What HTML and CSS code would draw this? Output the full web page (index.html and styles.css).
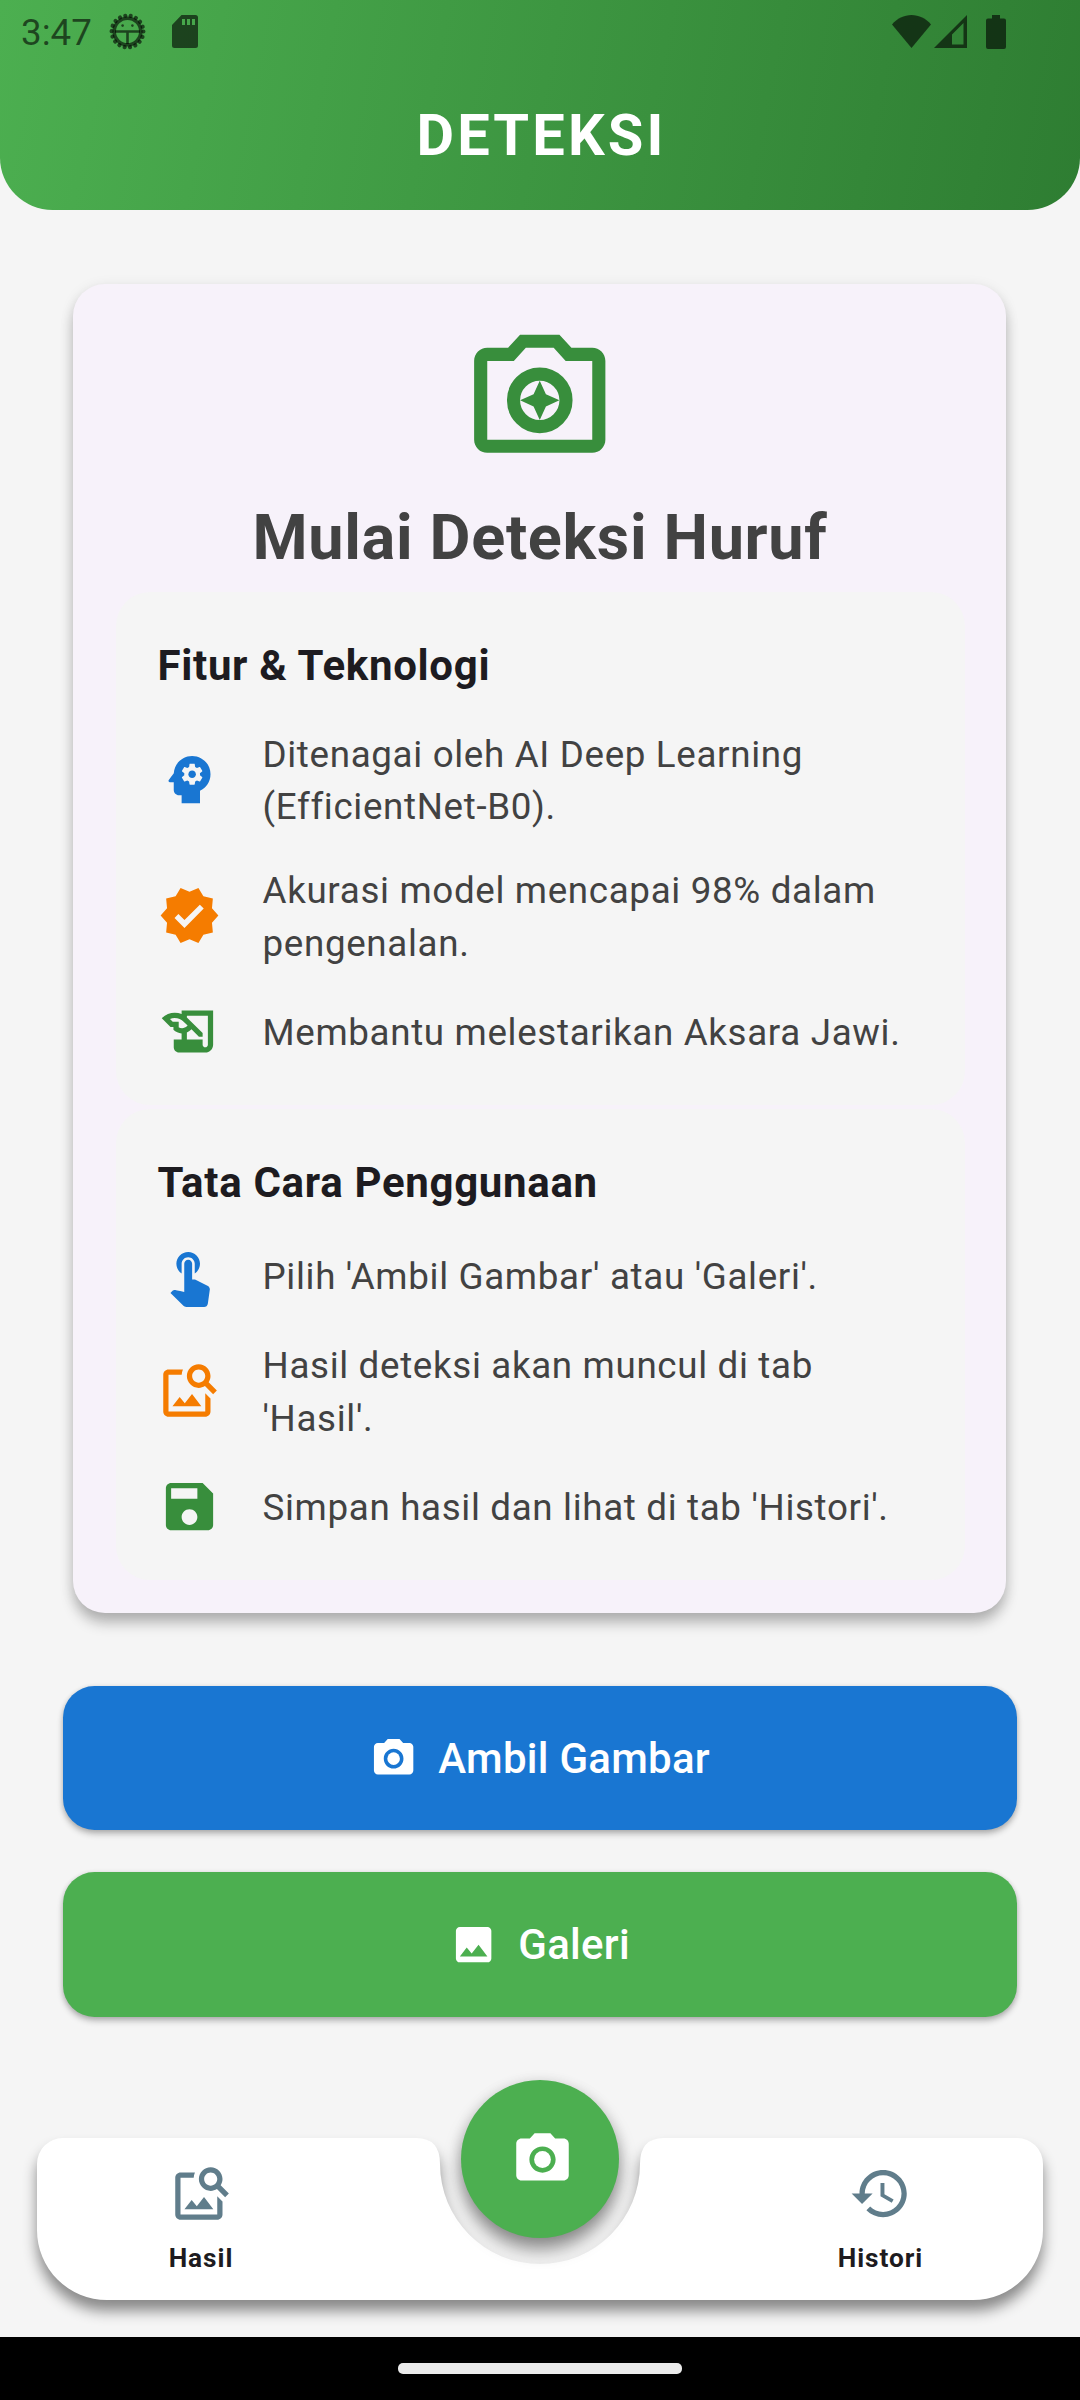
FILE: index.html
```html
<!DOCTYPE html>
<html lang="id">
<head>
<meta charset="utf-8">
<title>Deteksi</title>
<link rel="stylesheet" href="styles.css">
</head>
<body>
<svg width="0" height="0" class="sprite" aria-hidden="true">
  <symbol id="camera" viewBox="0 0 24 24"><circle cx="12" cy="12" r="3.2"/><path d="M9 2L7.17 4H4c-1.1 0-2 .9-2 2v12c0 1.1.9 2 2 2h16c1.1 0 2-.9 2-2V6c0-1.1-.9-2-2-2h-3.17L15 2H9zm3 15c-2.76 0-5-2.24-5-5s2.24-5 5-5 5 2.24 5 5-2.24 5-5 5z"/></symbol>
  <symbol id="image-search" viewBox="0 0 24 24"><path d="M18 13v7H4V6h5.02c.05-.71.22-1.38.48-2H4c-1.1 0-2 .9-2 2v14c0 1.1.9 2 2 2h14c1.1 0 2-.9 2-2v-5l-2-2zm-1.5 5h-11l2.75-3.53 1.96 2.36 2.75-3.54L16.5 18zm2.8-9.11c.44-.7.7-1.51.7-2.39C20 4.01 17.99 2 15.5 2S11 4.01 11 6.5s2.01 4.5 4.49 4.5c.88 0 1.7-.26 2.39-.7L21 13.42 22.42 12 19.3 8.89zM15.5 9C14.12 9 13 7.88 13 6.5S14.12 4 15.5 4 18 5.12 18 6.5 16.88 9 15.5 9z"/></symbol>
</svg>

<div class="screen">
  <header class="header">
    <div class="statusbar">
      <span class="clock">3:47</span>
      <svg class="gear" viewBox="0 0 37 37"><circle cx="18.5" cy="18.5" r="13.3" fill="none" stroke="currentColor" stroke-width="3.6"/><circle cx="18.5" cy="18.5" r="15.9" fill="none" stroke="currentColor" stroke-width="4.2" stroke-linecap="round" stroke-dasharray="0.01 5.54"/><path d="M6 17.300h25v2.500H6zM17.200 19h2.600v12h-2.600z"/><circle cx="13.6" cy="12.6" r="1.3"/><circle cx="23.4" cy="12.6" r="1.3"/></svg>
      <svg class="sd" viewBox="0 0 26 33"><path fill-rule="evenodd" d="M9.5 0H23.500a2.500 2.500 0 0 1 2.500 2.500V30.500a2.500 2.500 0 0 1-2.500 2.500H2.500A2.500 2.500 0 0 1 0 30.500V10zM10 4v6h3V4zM15 4v6h3V4zM20 4v6h3V4z"/></svg>
      <span class="spacer"></span>
      <svg class="wifi" viewBox="0 0 39 33"><path d="M19.500 33L0 9.500C5 3.500 12 0 19.500 0S34 3.500 39 9.500z"/></svg>
      <svg class="signal" viewBox="0 0 33 33"><path fill-rule="evenodd" d="M0 33L33 0V33zM18 19.500V29.500H29.500V8z"/></svg>
      <svg class="battery" viewBox="0 0 20 34"><path d="M6 0h8v3.500h4a2 2 0 0 1 2 2V32a2 2 0 0 1-2 2H2a2 2 0 0 1-2-2V5.500a2 2 0 0 1 2-2h4z"/></svg>
    </div>
    <h1 class="title">DETEKSI</h1>
  </header>

  <main class="content">
    <section class="card">
      <svg class="hero" viewBox="0 0 24 24"><path d="M12 10l-.94 2.06L9 13l2.06.94L12 16l.94-2.060L15 13l-2.060-.94z"/><path fill-rule="evenodd" d="M20 5h-3.170L15 3H9L7.170 5H4c-1.100 0-2 .9-2 2v12c0 1.100.9 2 2 2h16c1.100 0 2-.9 2-2V7c0-1.100-.9-2-2-2zm0 14H4V7h4.050l1.830-2h4.240l1.830 2H20v12z"/><circle cx="12" cy="13" r="4" fill="none" stroke="currentColor" stroke-width="2"/></svg>
      <h2 class="heading">Mulai Deteksi Huruf</h2>

      <div class="panel">
        <h3>Fitur &amp; Teknologi</h3>
        <ul>
          <li><svg class="icon blue" viewBox="0 0 24 24"><path d="M13 8.570c-.79 0-1.430.64-1.430 1.430s.64 1.430 1.430 1.430 1.430-.64 1.430-1.430-.64-1.430-1.430-1.430z"/><path d="M13 3C9.250 3 6.200 5.940 6.020 9.640L4.100 12.200c-.25.33-.01.8.4.8H6v3c0 1.100.9 2 2 2h1v3h7v-4.680c2.360-1.120 4-3.530 4-6.320 0-3.870-3.130-7-7-7zm3 7c0 .13-.01.26-.02.39l.83.66c.08.06.1.16.05.25l-.8 1.390c-.05.09-.16.12-.24.09l-.99-.4c-.21.16-.43.29-.67.39L14 13.830c-.01.1-.1.17-.2.17h-1.600c-.1 0-.18-.07-.2-.17l-.15-1.060c-.25-.1-.47-.23-.68-.39l-.99.4c-.09.03-.2 0-.25-.09l-.8-1.390c-.05-.08-.03-.19.05-.25l.84-.66c-.01-.13-.02-.26-.02-.39s.02-.27.04-.39l-.85-.66c-.08-.06-.1-.16-.05-.26l.8-1.380c.05-.09.15-.12.24-.09l1 .4c.2-.15.43-.29.67-.39L12 6.170c.02-.1.1-.17.2-.17h1.600c.1 0 .18.07.2.17l.15 1.060c.24.1.46.23.67.39l1-.4c.09-.03.2 0 .24.09l.8 1.380c.05.09.03.2-.05.26l-.85.66c.03.12.04.25.04.39z"/></svg>
            <span>Ditenagai oleh AI Deep Learning (EfficientNet-B0).</span></li>
          <li><svg class="icon orange" viewBox="0 0 24 24"><path d="M23 12l-2.440-2.790.34-3.690-3.610-.82-1.890-3.200L12 2.960 8.600 1.500 6.710 4.690 3.100 5.500l.34 3.700L1 12l2.440 2.790-.34 3.700 3.610.82L8.600 22.500l3.400-1.470 3.400 1.460 1.890-3.190 3.610-.82-.34-3.690L23 12zm-12.910 4.720l-3.800-3.810 1.480-1.480 2.320 2.330 5.850-5.870 1.480 1.480-7.330 7.350z"/></svg>
            <span>Akurasi model mencapai 98% dalam pengenalan.</span></li>
          <li><svg class="icon green" viewBox="0 0 24 24"><path d="M9 4v1.380c-.83-.33-1.720-.5-2.610-.5-1.790 0-3.580.68-4.950 2.050l3.330 3.330h1.110v1.110c.86.86 1.980 1.310 3.110 1.360V15H6v3c0 1.100.9 2 2 2h10c1.660 0 3-1.340 3-3V4H9zm-1.110 6.410V8.260H5.610L4.570 7.220c.55-.22 1.150-.34 1.760-.34 1.340 0 2.590.52 3.540 1.460l1.410 1.410-.2.2c-.51.51-1.190.8-1.920.8-.47 0-.93-.12-1.340-.34h.07zM19 17c0 .55-.45 1-1 1s-1-.45-1-1v-2h-6v-2.590c.57-.23 1.100-.57 1.560-1.030l.2-.2L15.590 14H17v-1.410l-6-5.970V6h8v11z"/></svg>
            <span>Membantu melestarikan Aksara Jawi.</span></li>
        </ul>
      </div>

      <div class="panel">
        <h3>Tata Cara Penggunaan</h3>
        <ul>
          <li><svg class="icon blue" viewBox="0 0 24 24"><path d="M9 11.240V7.500C9 6.120 10.120 5 11.500 5S14 6.120 14 7.500v3.740c1.210-.81 2-2.180 2-3.740C16 5.010 13.990 3 11.500 3S7 5.010 7 7.500c0 1.560.79 2.930 2 3.740zm9.840 4.630l-4.540-2.260c-.17-.07-.35-.11-.54-.11H13v-6c0-.83-.67-1.500-1.500-1.500S10 6.670 10 7.500v10.740c-3.600-.76-3.540-.75-3.670-.75-.31 0-.59.13-.79.33l-.79.8 4.940 4.940c.27.27.65.44 1.060.44h6.790c.75 0 1.330-.55 1.440-1.280l.75-5.270c.01-.07.02-.14.02-.2 0-.62-.38-1.160-.91-1.380z"/></svg>
            <span>Pilih 'Ambil Gambar' atau 'Galeri'.</span></li>
          <li><svg class="icon orange"><use href="#image-search"/></svg>
            <span>Hasil deteksi akan muncul di tab 'Hasil'.</span></li>
          <li><svg class="icon green" viewBox="0 0 24 24"><path d="M17 3H5c-1.110 0-2 .9-2 2v14c0 1.100.89 2 2 2h14c1.100 0 2-.9 2-2V7l-4-4zm-5 16c-1.660 0-3-1.340-3-3s1.340-3 3-3 3 1.340 3 3-1.340 3-3 3zm3-10H5V5h10v4z"/></svg>
            <span>Simpan hasil dan lihat di tab 'Histori'.</span></li>
        </ul>
      </div>
    </section>

    <div class="actions">
      <button class="btn btn-blue"><svg><use href="#camera"/></svg><span>Ambil Gambar</span></button>
      <button class="btn btn-green"><svg viewBox="0 0 24 24"><path d="M21 19V5c0-1.100-.9-2-2-2H5c-1.100 0-2 .9-2 2v14c0 1.100.9 2 2 2h14c1.100 0 2-.9 2-2zM8.500 13.500l2.500 3.010L14.500 12l4.500 6H5l3.500-4.500z"/></svg><span>Galeri</span></button>
    </div>
  </main>

  <nav class="navbar">
    <svg class="nav-shape" viewBox="0 0 1006 162"><path d="M26 0H379Q403 0 403 26A100 100 0 0 0 603 26Q603 0 627 0H980A26 26 0 0 1 1006 26V92A70 70 0 0 1 936 162H70A70 70 0 0 1 0 92V26A26 26 0 0 1 26 0z"/></svg>
    <a class="tab tab-left"><svg><use href="#image-search"/></svg><span>Hasil</span></a>
    <a class="tab tab-right"><svg viewBox="0 0 24 24"><path d="M13 3c-4.970 0-9 4.030-9 9H1l3.890 3.890.07.14L9 12H6c0-3.870 3.130-7 7-7s7 3.130 7 7-3.130 7-7 7c-1.930 0-3.680-.79-4.940-2.060l-1.420 1.420C8.270 19.990 10.510 21 13 21c4.970 0 9-4.030 9-9s-4.030-9-9-9zm-1 5v5l4.280 2.540.72-1.210-3.500-2.080V8H12z"/></svg><span>Histori</span></a>
    <button class="fab"><svg><use href="#camera"/></svg></button>
  </nav>

  <footer class="gesture"><div class="pill"></div></footer>
</div>
</body>
</html>
```
FILE: styles.css
```css
* { box-sizing: border-box; }

body {
  margin: 0;
  font-family: Roboto, "Noto Sans", sans-serif;
  background: #f5f5f5;
  color: #1d1b20;
}

svg { display: block; fill: currentColor; flex: none; }
.sprite { position: absolute; }
h1, h2, h3, ul { margin: 0; padding: 0; }
ul { list-style: none; }
button { border: 0; padding: 0; font-family: inherit; }

.screen {
  width: 1080px;
  height: 2400px;
  display: flex;
  flex-direction: column;
  overflow: hidden;
}

/* Header */
.header {
  height: 210px;
  border-radius: 0 0 52.5px 52.5px;
  background: linear-gradient(101deg, #4caf50, #2e7d32);
}

.statusbar {
  height: 63px;
  padding: 0 74px 0 21px;
  display: flex;
  align-items: center;
  color: rgba(0, 0, 0, .6);
}
.clock { font-size: 36.75px; line-height: 42px; padding-top: 3px; }
.spacer { flex: 1; }
.gear { width: 37px; height: 37px; margin-left: 17px; }
.sd { width: 26px; height: 33px; margin-left: 26px; }
.wifi { width: 39px; height: 33px; margin-right: 3px; }
.signal { width: 33px; height: 33px; margin-right: 19px; }
.battery { width: 20px; height: 34px; }

.title {
  text-align: center;
  color: #fff;
  font-size: 57.75px;
  line-height: 74px;
  font-weight: 700;
  letter-spacing: 3.15px;
  padding: 35px 0 0 3px;
}

/* Card */
.content { flex: 1; padding-top: 73.5px; }

.card {
  margin: 0 74px 0 73px;
  padding: 31.5px 41.5px 33px 42.5px;
  border-radius: 32px;
  background: #f7f2fa;
  box-shadow: 0 11px 14px -1px rgba(0, 0, 0, .24), 0 3px 14px rgba(0, 0, 0, .1);
}
.hero { width: 157.5px; height: 157.5px; margin: 0 auto; color: #388e3c; }

.heading {
  margin: 23px 0 12.5px;
  text-align: center;
  font-size: 63px;
  line-height: 84px;
  font-weight: 700;
  letter-spacing: .66px;
  color: #424242;
}

.panel {
  padding: 42px;
  border-radius: 34px;
  background: #f5f5f5;
}
.panel + .panel { margin-top: 4.5px; }
.panel h3 {
  font-size: 42px;
  line-height: 63px;
  font-weight: 700;
  letter-spacing: .68px;
  margin-bottom: 29.5px;
}
.panel ul { display: flex; flex-direction: column; gap: 31.5px; }
.panel li {
  display: flex;
  align-items: center;
  gap: 42px;
  font-size: 36.75px;
  line-height: 52.5px;
  letter-spacing: .66px;
  color: #424242;
}
.panel li span { padding-top: 2px; margin-bottom: -2px; }
.icon { width: 63px; height: 63px; }
.blue { color: #1976d2; }
.orange { color: #f57c00; }
.green { color: #388e3c; }

/* Action buttons */
.actions {
  padding: 73.5px 63px 0;
  display: flex;
  flex-direction: column;
  gap: 42px;
}
.btn {
  height: 144.4px;
  display: flex;
  align-items: center;
  justify-content: center;
  gap: 21px;
  border-radius: 31.5px;
  color: #fff;
  font-size: 42px;
  font-weight: 500;
  letter-spacing: .26px;
  box-shadow: 0 4px 6px rgba(0, 0, 0, .24), 0 1px 5px rgba(0, 0, 0, .12);
}
.btn svg { width: 47.25px; height: 47.25px; }
.btn-blue { background: #1976d2; }
.btn-green { background: #4caf50; }

/* Bottom navigation */
.navbar {
  height: 162px;
  margin: 0 37px 37px;
  display: grid;
  grid-template-columns: 326px 1fr 326px;
  position: relative;
}
.nav-shape {
  position: absolute;
  inset: 0;
  width: 1006px;
  height: 162px;
  color: #fff;
  overflow: visible;
  filter: drop-shadow(0 11px 7px rgba(0, 0, 0, .44));
}
.tab {
  position: relative;
  display: flex;
  flex-direction: column;
  align-items: center;
  padding: 24px 0 0 1px;
  font-size: 26.25px;
  line-height: 38px;
  font-weight: 700;
  letter-spacing: .95px;
}
.tab-left { grid-column: 1; padding-left: 2px; }
.tab-right { grid-column: 3; }
.tab svg { width: 63px; height: 63px; color: #607d8b; margin-bottom: 14px; }

.fab {
  position: absolute;
  left: 424px;
  top: -58px;
  width: 158px;
  height: 158px;
  border-radius: 50%;
  display: grid;
  place-items: center;
  padding-left: 4px;
  color: #fff;
  background: #4caf50;
  box-shadow: 0 12px 18px rgba(0, 0, 0, .4), 0 2px 14px rgba(0, 0, 0, .12);
}
.fab svg { width: 63px; height: 63px; }

.gesture {
  height: 63px;
  background: #000;
  display: grid;
  place-items: center;
}
.pill { width: 284px; height: 11px; border-radius: 5px; background: #ebebeb; }
```
